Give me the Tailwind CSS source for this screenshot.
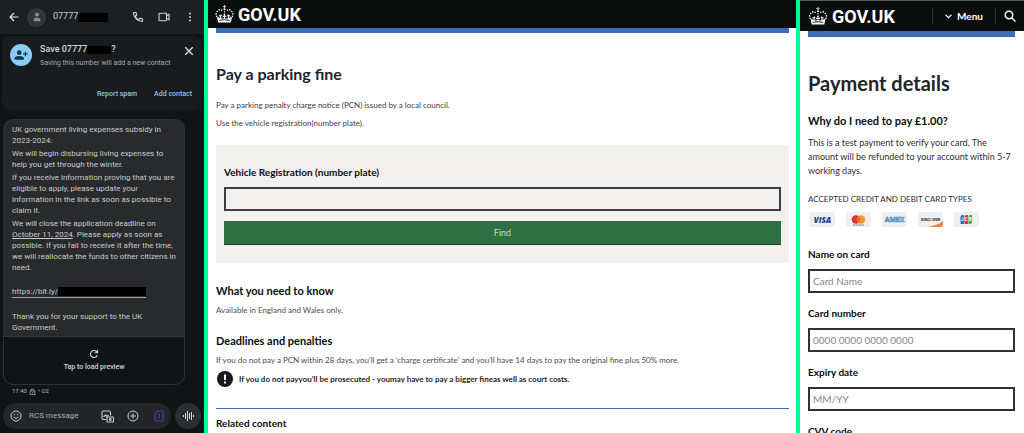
<!DOCTYPE html>
<html lang="en">
<head>
<meta charset="utf-8">
<meta name="viewport" content="width=device-width, initial-scale=1">
<title>Pay a parking fine</title>
<script src="https://cdn.jsdelivr.net/npm/@tailwindcss/browser@4"></script>
</head>
<body class="bg-white">
<svg class="hidden" aria-hidden="true">
  <symbol id="crown" viewBox="0 0 38 36">
    <g fill="#fff">
      <circle cx="19" cy="8.500" r="2.200"/><path d="M18 0h2l-.5 2.400 2.500-.5v2.200l-2.500-.5.5 2.400h-2l.5-2.400-2.500.5V1.900l2.500.5z"/>
      <circle cx="13.200" cy="10.400" r="1.500"/><circle cx="8.400" cy="9.800" r="1.600"/><circle cx="4.400" cy="13" r="1.600"/><circle cx="2.200" cy="17.800" r="1.600"/><circle cx="3.200" cy="22.800" r="1.600"/>
      <circle cx="24.800" cy="10.400" r="1.500"/><circle cx="29.600" cy="9.800" r="1.600"/><circle cx="33.600" cy="13" r="1.600"/><circle cx="35.800" cy="17.800" r="1.600"/><circle cx="34.800" cy="22.800" r="1.600"/>
      <circle cx="19" cy="13.500" r="1.300"/>
      <path d="M19 17c1.500 0 2.200 1.300 1.500 2.600l-.8 2.400 3-1v3.400l-3-1 .8 3.400 5 .4.300-4.800c-1.500-.4-1.700-2.500-.3-3.100 1.300-.6 2.500.5 2.100 1.900l2.400-1v3l-2.200-.6.200 4 4-2.900 1.800 1.800L31.500 35h-25L4.200 25.500 6 23.700l4 2.900.2-4-2.200.6v-3l2.400 1c-.4-1.400.8-2.500 2.100-1.900 1.400.6 1.200 2.700-.3 3.100l.3 4.800 5-.4.8-3.400-3 1V21l3 1-.8-2.400C16.800 18.300 17.500 17 19 17z"/>
    </g>
    <path d="M8.500 30.700q10.500-2.400 21 0" stroke="#0b0c0c" stroke-width="1.800" fill="none"/>
  </symbol>
</svg>

<main class="grid h-screen grid-cols-[204fr_4px_588fr_4px_224fr] overflow-hidden font-['Lato',sans-serif]">

  <!-- Messages app -->
  <section class="flex min-w-0 flex-col bg-[#101417] font-['Roboto',sans-serif] text-[8px] text-[#c8cacc]">
    <header class="flex h-[34px] items-center bg-[#1d2023] pr-2 pl-2">
      <button aria-label="Back" class="size-3"><svg viewBox="0 0 24 24" class="size-3" fill="none" stroke="#e3e3e3" stroke-width="2.400"><path d="M21 12H4M12 4l-8 8 8 8"/></svg></button>
      <span class="ml-[7px] flex size-[19px] items-center justify-center rounded-full bg-[#333537]"><svg viewBox="0 0 24 24" class="size-[10px]" fill="#8d8f91"><circle cx="12" cy="6" r="4.500"/><path d="M4 22v-3.500c0-6 16-6 16 0V22z"/></svg></span>
      <span class="ml-[7px] text-[9px] text-[#c8cacc]">07777</span>
      <span class="h-[9px] w-[30px] bg-black"></span>
      <span class="ml-auto flex items-center gap-[14px]">
        <button aria-label="Call" class="size-3"><svg viewBox="0 0 24 24" class="size-3" fill="none" stroke="#d0d2d4" stroke-width="2.200"><path d="M3 3h5l1.500 5-3 2.500c1.500 3 4 5.500 7 7l2.500-3 5 1.500v5C11 21 3 13 3 3z"/></svg></button>
        <button aria-label="Video call" class="size-3"><svg viewBox="0 0 24 24" class="size-3" fill="none" stroke="#d0d2d4" stroke-width="2.200"><rect x="2" y="4.500" width="15" height="15" rx="1"/><path d="M17 9.500l5-3v11l-5-3"/></svg></button>
        <button aria-label="More options" class="size-3"><svg viewBox="0 0 24 24" class="size-3" fill="#d0d2d4"><circle cx="12" cy="5" r="2"/><circle cx="12" cy="12" r="2"/><circle cx="12" cy="19" r="2"/></svg></button>
      </span>
    </header>

    <div class="mx-[2px] mt-[2px] flex h-[74px] flex-col rounded-[8px] bg-[#181c1f] p-2">
      <div class="flex">
        <span class="flex size-[22px] items-center justify-center rounded-full bg-[#8accf8]"><svg viewBox="0 0 24 24" class="size-[14px]" fill="#16354a"><circle cx="9" cy="8" r="4"/><path d="M1 20v-2.500c0-5 16-5 16 0V20zM18.500 6h2v3h3v2h-3v3h-2v-3h-3V9h3z"/></svg></span>
        <div class="ml-2">
          <div class="flex h-3 items-center text-[9px] font-medium whitespace-nowrap text-[#d5d7d9]"><span>Save 07777</span><span class="h-2 w-[24px] bg-black"></span><span>?</span></div>
          <p class="text-[7px] leading-[14px] whitespace-nowrap text-[#a6a9ac]">Saving this number will add a new contact</p>
        </div>
        <button aria-label="Dismiss" class="mt-[2px] ml-auto size-[10px]"><svg viewBox="0 0 24 24" class="size-[10px]" stroke="#e3e3e3" stroke-width="3"><path d="M3 3l18 18M21 3L3 21"/></svg></button>
      </div>
      <div class="mt-auto mr-[2px] mb-[2px] flex justify-end gap-[17px] text-[7px] leading-3 font-medium text-[#8fc3e6]"><button>Report spam</button><button>Add contact</button></div>
    </div>

    <article class="mt-[9px] mr-[19px] ml-[3px] rounded-[10px] border border-[#2e3032] bg-[#282a2c]">
      <div class="space-y-[2px] pt-[4px] pb-[3px] pl-2 text-[8px] leading-[11px] whitespace-nowrap">
        <p>UK government living expenses subsidy in<br>2023-2024:</p>
        <p>We will begin disbursing living expenses to<br>help you get through the winter.</p>
        <p>If you receive information proving that you are<br>eligible to apply, please update your<br>information in the link as soon as possible to<br>claim it.</p>
        <p>We will close the application deadline on<br><a href="#" class="underline">October 11, 2024</a>. Please apply as soon as<br>possible. If you fail to receive it after the time,<br>we will reallocate the funds to other citizens in<br>need.</p>
        <p class="py-[11px]"><a href="#" class="flex w-[134px] border-b border-[#a0a2a4]">https://bit.ly/<span class="mt-[1px] h-[9px] flex-1 bg-black"></span></a></p>
        <p>Thank you for your support to the UK<br>Government.</p>
      </div>
      <button class="flex h-[48px] w-full flex-col items-center justify-center gap-[2px] rounded-b-[9px] border-t border-[#36383a] bg-[#101417] text-[7px] leading-3 font-medium text-[#d5d7d9]">
        <svg viewBox="0 0 24 24" class="size-[10px]" fill="none" stroke="#d5d7d9" stroke-width="2.600"><path d="M20 15a8.500 8.500 0 1 1-1.500-8.500L20 8.500M20.500 2v7h-7"/></svg>
        Tap to load preview
      </button>
    </article>
    <p class="mt-[1px] flex items-center gap-[2px] pl-3 text-[6px] leading-[10px] text-[#b4b7ba]">17:40
      <svg viewBox="0 0 24 24" class="size-[7px]" fill="none" stroke="#9da0a3" stroke-width="3"><rect x="4" y="10" width="16" height="12"/><path d="M7 10V6q5-6 10 0v4M12 14v4"/></svg>
      <span>• O2</span></p>

    <footer class="mt-[7px] flex items-center gap-1 px-[3px]">
      <div class="flex h-[26px] flex-1 items-center rounded-full bg-[#232628] pr-[6px] pl-[7px]">
        <button aria-label="Emoji" class="size-3"><svg viewBox="0 0 24 24" class="size-3" fill="none" stroke="#c8cacc" stroke-width="2"><circle cx="12" cy="12" r="10"/><path d="M7 14q5 6 10 0"/><path d="M8.500 7.500v3M15.500 7.500v3"/></svg></button>
        <input aria-label="RCS message" placeholder="RCS message" class="ml-[7px] w-0 flex-1 bg-transparent text-[8px] placeholder-[#a9abad] outline-none">
        <button aria-label="Gallery" class="size-[13px]"><svg viewBox="0 0 26 26" class="size-[13px]" fill="none" stroke="#c8cacc" stroke-width="2.200"><path d="M10 19H5a3 3 0 0 1-3-3V5a3 3 0 0 1 3-3h11a3 3 0 0 1 3 3v6M5 14l4-4 3 3 3-3"/><rect x="12" y="14" width="13" height="10" rx="1"/><circle cx="18.500" cy="19" r="1.800"/></svg></button>
        <button aria-label="Attach" class="ml-[13px] size-3"><svg viewBox="0 0 24 24" class="size-3" fill="none" stroke="#c8cacc" stroke-width="2"><circle cx="12" cy="12" r="10"/><path d="M12 6.500v11M6.500 12h11"/></svg></button>
        <button aria-label="SIM 1" class="ml-[14px] size-3"><svg viewBox="0 0 24 24" class="size-3" fill="none" stroke="#6a2fa8" stroke-width="2.200"><path d="M9 2h9a2 2 0 0 1 2 2v16a2 2 0 0 1-2 2H6a2 2 0 0 1-2-2V7zM10.500 9.500l2-1V17"/></svg></button>
      </div>
      <button aria-label="Voice message" class="flex size-[26px] items-center justify-center rounded-full bg-[#2c2e30]"><svg viewBox="0 0 11 12" class="h-3 w-[11px]" stroke="#d5d7d9" stroke-width="1"><path d="M.5 5v2M2.500 3v6M4.500 1v10M6.500 3v6M8.500 2v8M10.500 5v2"/></svg></button>
    </footer>
  </section>

  <div class="bg-[#00ff94]"></div>

  <!-- Parking fine page -->
  <section class="min-w-0 text-[#0b0c0c]">
    <header class="flex h-7 items-center bg-[#0b0c0c] px-[7px]">
      <a href="#" aria-label="GOV.UK" class="flex items-center gap-[4px] text-white"><svg class="h-[18px] w-[19px]"><use href="#crown"/></svg><span class="mt-[2px] font-['Roboto',sans-serif] text-[18px] leading-5 font-bold">GOV.UK</span></a>
    </header>
    <div class="mr-[7px] ml-[8px]">
      <div class="h-[5px] bg-[#3a6fb5]"></div>
      <h1 class="mt-[31px] text-[16px] leading-5 font-bold text-[#1f2426]">Pay a parking fine</h1>
      <p class="mt-[15px] text-[8px] leading-3 text-[#3c4042]">Pay a parking penalty charge notice (PCN) issued by a local council.</p>
      <p class="mt-[6px] text-[8px] leading-3 text-[#3c4042]">Use the vehicle registration(number plate).</p>
      <form class="mt-4 bg-[#f2f1ef] px-2 pt-5 pb-[18px]">
        <label for="reg" class="block text-[10px] leading-[14px] font-bold">Vehicle Registration (number plate)</label>
        <input id="reg" class="mt-2 block h-6 w-full border-2 border-[#3c4042] bg-transparent px-1 text-[10px]">
        <button type="button" class="mt-[10px] block h-6 w-full border-b border-[#1f3a28] bg-[#2f7042] text-[9px] text-[#c9d8cd]">Find</button>
      </form>
      <h2 class="mt-5 text-[11px] leading-4 font-bold">What you need to know</h2>
      <p class="mt-[5px] text-[8px] leading-3 text-[#4a4e50]">Available in England and Wales only.</p>
      <h2 class="mt-[17px] text-[11px] leading-4 font-bold">Deadlines and penalties</h2>
      <p class="mt-[5px] text-[8px] leading-3 text-[#4a4e50]">If you do not pay a PCN within 28 days, you’ll get a ‘charge certificate’ and you’ll have 14 days to pay the original fine plus 50% more.</p>
      <div class="mt-[5px] flex items-center gap-[6px] pl-[1px]">
        <svg viewBox="0 0 16 16" class="size-4"><circle cx="8" cy="8" r="8" fill="#151a1c"/><path d="M7 3.500h2v5.500H7zM7 10.500h2v2H7z" fill="#fff"/></svg>
        <strong class="text-[8px] leading-3 font-bold text-[#1f2426]">If you do not payyou’ll be prosecuted - youmay have to pay a bigger fineas well as court costs.</strong>
      </div>
      <h2 class="mt-[21px] border-t border-[#3a6fb5] pt-[6px] text-[10px] leading-4 font-bold">Related content</h2>
    </div>
  </section>

  <div class="bg-[#00ff94]"></div>

  <!-- Payment page -->
  <section class="min-w-0 text-[#0b0c0c]">
    <header class="flex h-[31px] items-center border-t border-[#5a5d5d] bg-[#0b0c0c] pr-2 pl-2 text-white">
      <a href="#" aria-label="GOV.UK" class="flex items-center gap-[4px]"><svg class="h-[18px] w-[20px]"><use href="#crown"/></svg><span class="mt-[2px] font-['Roboto',sans-serif] text-[18px] leading-5 font-bold">GOV.UK</span></a>
      <button class="ml-auto flex h-4 items-center gap-[5px] border-x border-[#2b2e2e] px-3 text-[10px] font-bold"><svg viewBox="0 0 12 12" class="size-[7px]" fill="none" stroke="#fff" stroke-width="2"><path d="M1 3l5 5 5-5"/></svg>Menu</button>
      <button aria-label="Search" class="ml-2 size-3"><svg viewBox="0 0 24 24" class="size-3" fill="none" stroke="#fff" stroke-width="3"><circle cx="10" cy="10" r="7.500"/><path d="M15.500 15.500L23 23"/></svg></button>
    </header>
    <div class="mr-[9px] ml-2">
      <div class="h-[6px] bg-[#3a6fb5]"></div>
      <h1 class="mt-[34px] text-[20px] leading-6 font-bold text-[#1f2426]">Payment details</h1>
      <h2 class="mt-[18px] text-[11px] leading-4 font-bold">Why do I need to pay £1.00?</h2>
      <p class="mt-[7px] text-[9px] leading-[14px] text-[#2b2f31]">This is a test payment to verify your card. The<br>amount will be refunded to your account within 5-7<br>working days.</p>
      <h3 class="mt-[15px] text-[8px] leading-3 whitespace-nowrap text-[#2b2f31]">ACCEPTED CREDIT AND DEBIT CARD TYPES</h3>
      <div class="mt-[7px] flex gap-[11px] pl-[2px]">
        <svg role="img" aria-label="Visa" viewBox="0 0 25 15" class="h-[15px] w-[25px] rounded-[2px] bg-[#efefef]"><text x="12.500" y="10.800" text-anchor="middle" font-family="Open Sans" font-size="8" font-weight="800" font-style="italic" fill="#27399a">VISA</text></svg>
        <svg role="img" aria-label="Mastercard" viewBox="0 0 25 15" class="h-[15px] w-[25px] rounded-[2px] bg-[#efefef]"><circle cx="10" cy="7.500" r="4.300" fill="#dc3138"/><circle cx="15" cy="7.500" r="4.300" fill="#f0983a"/><path d="M12.500 4a4.300 4.300 0 0 1 0 7 4.300 4.300 0 0 1 0-7z" fill="#ee6430"/><path d="M7 13h11" stroke="#666" stroke-dasharray="1 .4"/></svg>
        <svg role="img" aria-label="Amex" viewBox="0 0 25 15" class="h-[15px] w-[25px] rounded-[2px] bg-[#efefef]"><text x="12.500" y="10" text-anchor="middle" font-family="Roboto" font-size="7" font-weight="900" fill="#dcecf8" stroke="#3d88c4" stroke-width=".6">AMEX</text></svg>
        <svg role="img" aria-label="Discover" viewBox="0 0 25 15" class="h-[15px] w-[25px] rounded-[2px] bg-[#efefef]"><path d="M9 15Q20 13.500 25 9v6z" fill="#e8873a"/><text x="12.500" y="9" text-anchor="middle" font-family="Roboto" font-size="4" font-weight="900" fill="#333">DISC<tspan fill="#e8873a">O</tspan>VER</text></svg>
        <svg role="img" aria-label="JCB" viewBox="0 0 25 15" class="h-[15px] w-[25px] rounded-[2px] bg-[#efefef]"><path d="M8.500 3H10v9H6.500V5q0-2 2-2z" fill="#2f6fc0"/><path d="M12.500 3H14v9h-3.500V5q0-2 2-2z" fill="#d8364a"/><path d="M16.500 3H18v7q0 2-2 2h-1.500V5q0-2 2-2z" fill="#3fa64c"/><text x="12.300" y="9.200" text-anchor="middle" font-family="Roboto" font-size="4.500" font-weight="700" fill="#fff">J C B</text></svg>
      </div>
      <form>
        <label for="name" class="mt-5 block text-[10px] leading-[14px] font-bold">Name on card</label>
        <input id="name" placeholder="Card Name" class="mt-2 block h-6 w-full border-2 border-[#2f3335] px-[3px] text-[10px] placeholder-[#85888a]">
        <label for="number" class="mt-[13px] block text-[10px] leading-[14px] font-bold">Card number</label>
        <input id="number" placeholder="0000 0000 0000 0000" class="mt-2 block h-6 w-full border-2 border-[#2f3335] px-[3px] text-[10px] placeholder-[#85888a]">
        <label for="expiry" class="mt-[13px] block text-[10px] leading-[14px] font-bold">Expiry date</label>
        <input id="expiry" placeholder="MM/YY" class="mt-2 block h-6 w-full border-2 border-[#2f3335] px-[3px] text-[10px] placeholder-[#85888a]">
        <label for="cvv" class="mt-[13px] block text-[10px] leading-[14px] font-bold">CVV code</label>
        <input id="cvv" class="mt-2 block h-6 w-full border-2 border-[#2f3335] px-[3px] text-[10px]">
      </form>
    </div>
  </section>
</main>
</body>
</html>
